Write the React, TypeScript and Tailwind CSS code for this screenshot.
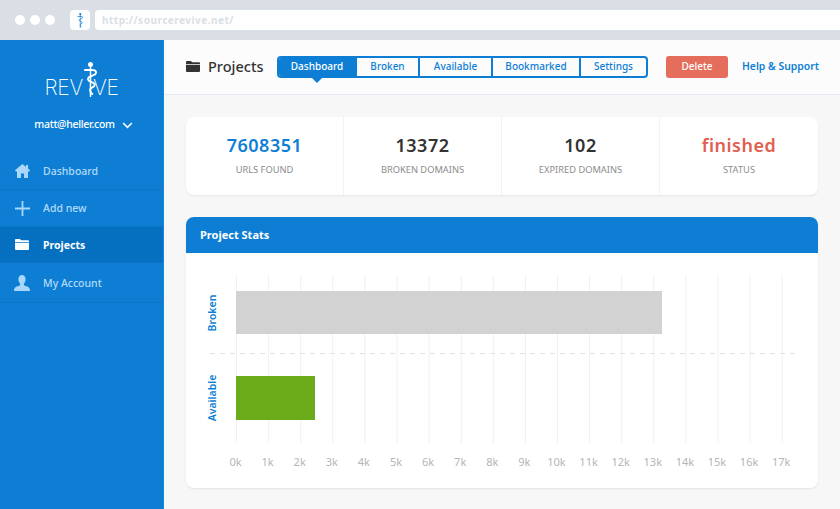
const uiFont = { fontFamily: '"Noto Sans", sans-serif' }

function Rod({ className }: { className: string }) {
    return (
        <svg viewBox="0 0 14 35" className={className} fill="none" stroke="currentColor">
            <circle cx="6.500" cy="2.500" r="2.500" fill="currentColor" stroke="none" />
            <path d="M6.500 5v29.500" strokeWidth="1.500" strokeLinecap="round" />
            <path d="M.8 8h7.500c4.500 0 5 3.800 1.200 5.200-3.500 1.300-6 2.300-5.400 4.600.6 2.300 6.400 2 6.600 5 .2 2.800-4.700 2.500-4.700 5.200 0 1.800 1.300 3 2.300 4" strokeWidth="1.900" strokeLinecap="round" />
        </svg>
    )
}

function HomeIcon({ className }: { className: string }) {
    return (
        <svg viewBox="0 0 15 14" className={className} fill="currentColor">
            <path d="M7.500 0 11 2.900V1h2v3.600l2 1.700-.7 1.200H13V14H9V9.500H6V14H2V7.500H.7L0 6.300Z" />
        </svg>
    )
}

function FolderIcon({ className }: { className: string }) {
    return (
        <svg viewBox="0 0 14 11" className={className} fill="currentColor">
            <path d="M1 0h4l1 1.300h7a1 1 0 0 1 1 1V3H0V1a1 1 0 0 1 1-1Z" />
            <path d="M0 3.700h14V10a1 1 0 0 1-1 1H1a1 1 0 0 1-1-1Z" />
        </svg>
    )
}

function PlusIcon({ className }: { className: string }) {
    return (
        <svg viewBox="0 0 15 15" className={className} fill="currentColor">
            <path d="M6.600 0h1.800v6.600H15v1.800H8.400V15H6.600V8.400H0V6.600h6.600Z" />
        </svg>
    )
}

function UserIcon({ className }: { className: string }) {
    return (
        <svg viewBox="0 0 16 16" className={className} fill="currentColor">
            <path d="M8 0c2.200 0 3.600 1.700 3.600 4.200 0 1.800-.8 3.300-1.700 4.200v1.300c0 .7 1 1 2.600 1.600 2 .8 3.500 1.400 3.500 4.700H0c0-3.300 1.500-3.900 3.500-4.700 1.600-.6 2.600-.9 2.600-1.600V8.400C5.200 7.500 4.400 6 4.400 4.200 4.400 1.700 5.800 0 8 0Z" />
        </svg>
    )
}

const navItems = [
    { label: "Dashboard", icon: <HomeIcon className="h-[14px] w-[15px]" />, h: "h-[38px]" },
    { label: "Add new", icon: <PlusIcon className="h-[15px] w-[15px]" />, h: "h-[37px]" },
    { label: "Projects", icon: <FolderIcon className="h-[11px] w-[14px]" />, h: "h-[36px]", active: true },
    { label: "My Account", icon: <UserIcon className="h-[16px] w-[16px]" />, h: "h-[40px]" },
]

const tabs = ["Broken", "Available", "Bookmarked", "Settings"]
const tabWidths = ["w-[63px]", "w-[73px]", "w-[88px]", "w-[67px]"]

const stats = [
    { value: "7608351", label: "URLS FOUND", color: "text-[#0d7ed4]" },
    { value: "13372", label: "BROKEN DOMAINS", color: "text-[#333333]" },
    { value: "102", label: "EXPIRED DOMAINS", color: "text-[#333333]" },
    { value: "finished", label: "STATUS", color: "text-[#e2604f]" },
]

function Chart() {
    const ticks = Array.from({ length: 18 }, (_, i) => i)
    return (
        <svg viewBox="0 0 632 235" className="h-[235px] w-[632px]">
            {ticks.map((t) => (
                <line key={t} x1={50.5 + t * 32.1} x2={50.5 + t * 32.1} y1="22" y2="190" stroke="#f0f0f0" />
            ))}
            <line x1="24" x2="610" y1="100.500" y2="100.500" stroke="#e2e2e2" strokeDasharray="5 5" />
            <rect x="50" y="38" width="426" height="43" fill="#d2d2d2" />
            <rect x="50" y="123" width="79" height="44" fill="#6bab1a" />
            <text transform="translate(30 60) rotate(-90)" textAnchor="middle" fontSize="10.500" fontWeight="600" fill="#0d7ed4">Broken</text>
            <text transform="translate(30 145) rotate(-90)" textAnchor="middle" fontSize="10.500" fontWeight="600" fill="#0d7ed4">Available</text>
            {ticks.map((t) => (
                <text key={t} x={49.5 + t * 32.1} y="213" textAnchor="middle" fontSize="11" fill="#b5b5b5">{t}k</text>
            ))}
        </svg>
    )
}

export default function App() {
    return (
        <div className="flex h-[509px] w-[840px] flex-col overflow-hidden bg-[#f7f7f7]" style={uiFont}>
            <div className="flex h-10 shrink-0 items-center bg-[#d9dfe5] pl-[15px]">
                <div className="flex gap-[5px]">
                    <span className="h-[10px] w-[10px] rounded-full bg-white" />
                    <span className="h-[10px] w-[10px] rounded-full bg-white" />
                    <span className="h-[10px] w-[10px] rounded-full bg-white" />
                </div>
                <div className="ml-[15px] flex h-5 w-5 items-center justify-center rounded-sm bg-white text-[#0d7ed4]">
                    <Rod className="h-[15px] w-[7px]" />
                </div>
                <div className="ml-[5px] flex h-5 flex-1 items-center rounded-l-sm bg-white pl-[7px] text-[10px] font-bold tracking-[0.5px] text-[#d9dfe5]">
                    http://sourcerevive.net/
                </div>
            </div>

            <div className="flex min-h-0 flex-1">
                <aside className="w-[164px] shrink-0 border-r border-[#1a86d8] bg-[#0d7ed4]">
                    <div className="flex h-[60px] items-start justify-center pt-[22px] text-white">
                        <div className="flex items-start">
                            <span className="mt-[13px] text-[21px] leading-[26px] font-extralight tracking-[-0.3px]" style={{ fontFamily: "Inter, sans-serif" }}>REV</span>
                            <Rod className="mr-[-5px] ml-[1px] h-[35px] w-[14px] shrink-0" />
                            <span className="mt-[13px] text-[21px] leading-[26px] font-extralight tracking-[-0.3px]" style={{ fontFamily: "Inter, sans-serif" }}>VE</span>
                        </div>
                    </div>
                    <div className="flex h-[52px] items-center justify-center gap-[7px] pb-[2px] pl-[4px] text-[10.500px] font-medium tracking-[-0.3px] text-white">
                        <span>matt@heller.com</span>
                        <svg viewBox="0 0 12 8" className="h-[7px] w-[11px]" fill="none" stroke="currentColor" strokeWidth="1.800">
                            <path d="M1 1.200l5 5 5-5" />
                        </svg>
                    </div>
                    <nav>
                        {navItems.map((item) => (
                            <div
                                key={item.label}
                                className={`flex items-center border-b text-[10.500px] ${item.h} ${
                                    item.active
                                        ? "border-[#0a74c5] bg-[#0570c0] font-bold text-white"
                                        : "border-[#0b76c8] font-medium text-[#b3dafa]"
                                }`}
                            >
                                <span className={`flex w-[43px] justify-center pl-[1px] ${item.active ? "text-white" : "text-[#a9d6fb]"}`}>
                                    {item.icon}
                                </span>
                                <span className="pt-[2px]">{item.label}</span>
                            </div>
                        ))}
                    </nav>
                </aside>

                <main className="min-w-0 flex-1">
                    <header className="flex h-[55px] items-center border-b border-[#e4ebf2] bg-[#fcfcfc] pb-[1px] pl-[22px]">
                        <FolderIcon className="h-[11px] w-[14px] text-[#333333]" />
                        <h1 className="ml-[8px] w-[69px] pt-[1px] text-[14.500px] font-medium text-[#333333]">Projects</h1>
                        <div className="relative flex h-[22px] rounded-[4px] border-2 border-[#0d7ed4] text-[10px] font-medium text-[#0d7ed4]">
                            <div className="relative flex w-[76px] items-center justify-center rounded-l-[2px] bg-[#0d7ed4] text-white">
                                Dashboard
                                <span className="absolute top-[calc(100%+2px)] left-1/2 h-0 w-0 -translate-x-1/2 border-x-[5px] border-t-[5px] border-x-transparent border-t-[#0d7ed4]" />
                            </div>
                            {tabs.map((tab, i) => (
                                <div key={tab} className={`flex items-center justify-center border-l-2 border-[#0d7ed4] ${tabWidths[i]}`}>
                                    {tab}
                                </div>
                            ))}
                        </div>
                        <button className="ml-[18px] h-[22px] w-[62px] rounded-[3px] bg-[#e46d5b] text-[10px] font-medium text-white">
                            Delete
                        </button>
                        <a href="#" className="ml-[14px] text-[10.400px] font-semibold whitespace-nowrap text-[#0d7ed4]">
                            Help &amp; Support
                        </a>
                    </header>

                    <div className="flex flex-col gap-[22px] pt-[22px] pr-[22px] pl-[22px]">
                        <section className="grid h-[78px] grid-cols-4 rounded-[8px] bg-white shadow-[0_1px_2px_rgba(0,0,0,0.08)]">
                            {stats.map((s, i) => (
                                <div key={s.label} className={`flex flex-col items-center pt-[16px] ${i < 3 ? "border-r border-[#f3f3f3]" : ""}`}>
                                    <div className={`text-[18px] leading-[24px] font-semibold tracking-[0.5px] ${s.color}`}>{s.value}</div>
                                    <div className="mt-[6px] text-[9.300px] leading-[14px] text-[#8c8c8c]">{s.label}</div>
                                </div>
                            ))}
                        </section>

                        <section className="h-[271px] overflow-hidden rounded-[8px] bg-white shadow-[0_1px_2px_rgba(0,0,0,0.08)]">
                            <div className="flex h-9 items-center bg-[#0d7ed4] pl-[14px] text-[11px] font-bold text-white">
                                Project Stats
                            </div>
                            <Chart />
                        </section>
                    </div>
                </main>
            </div>
        </div>
    )
}
